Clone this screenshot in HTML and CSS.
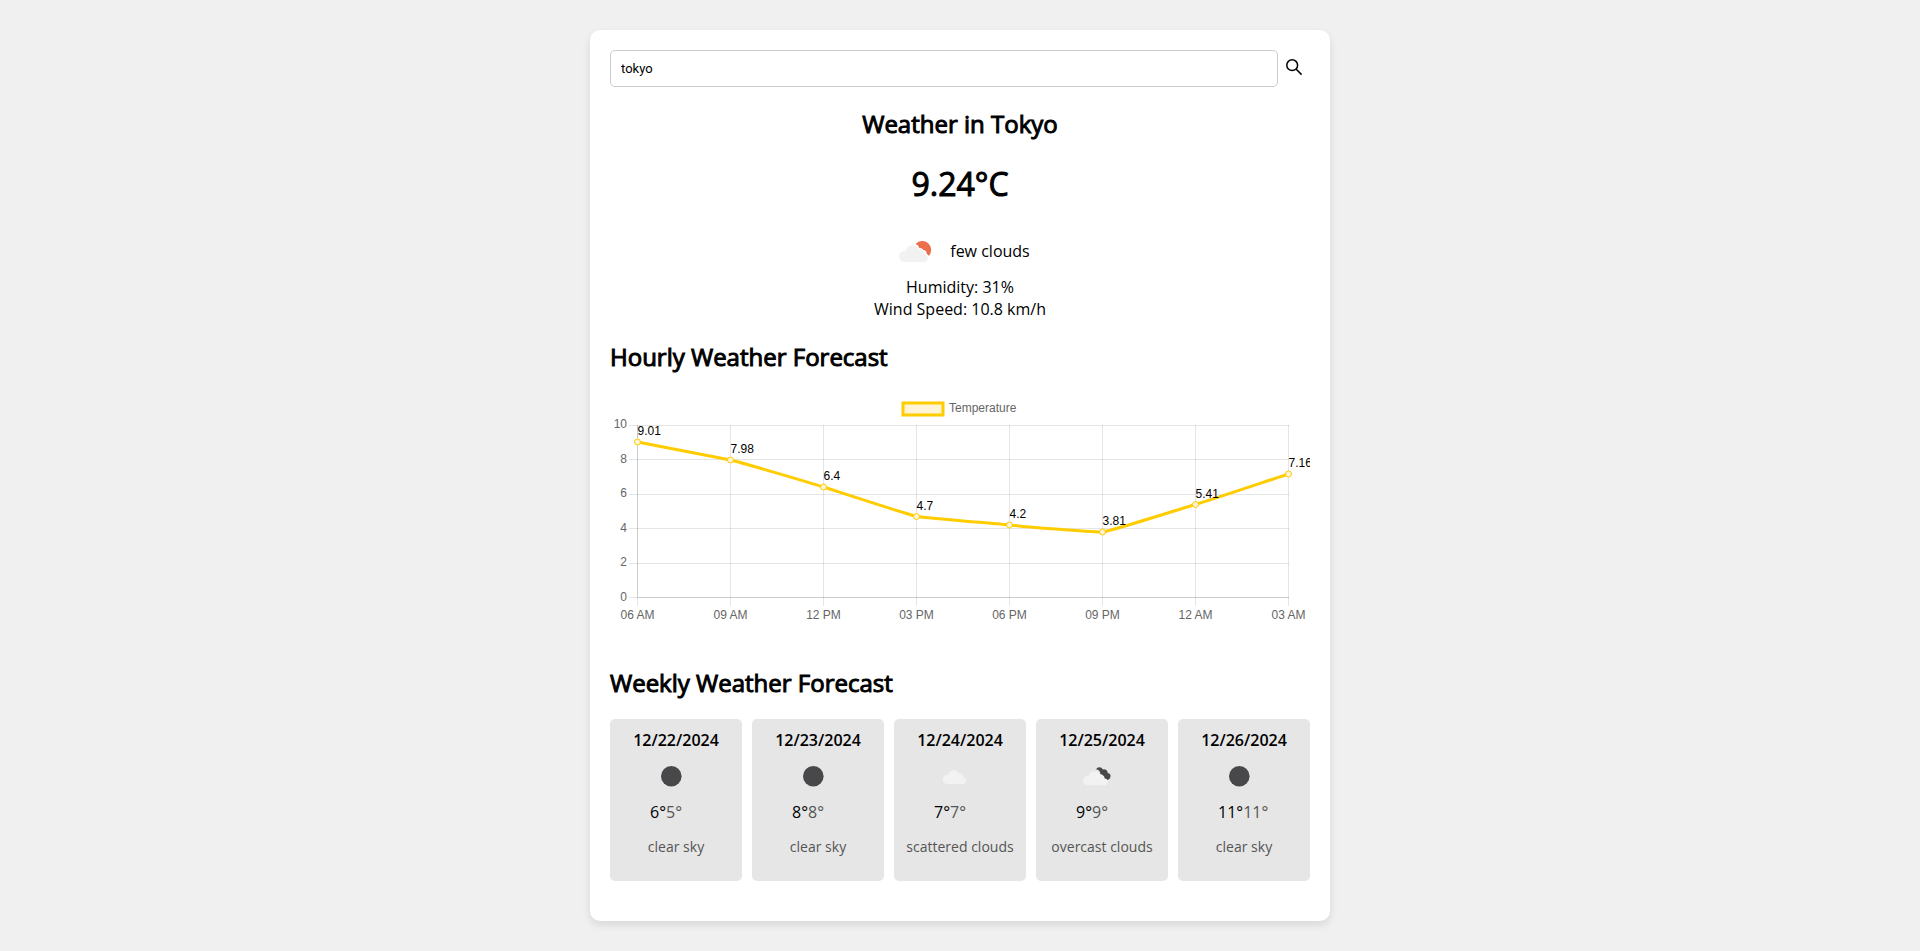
FILE: index.html
```html
<!DOCTYPE html>
<html lang="en">
<head>
<meta charset="utf-8">
<title>Weather</title>
<link rel="stylesheet" href="styles.css">
</head>
<body>
<svg class="sprite" aria-hidden="true">
  <symbol id="clear-night" viewBox="0 0 50 50"><circle cx="25.300" cy="25.300" r="10.300" fill="#48484a"/></symbol>
  <symbol id="cloud" viewBox="0 0 50 50"><path fill="#f2f2f2" d="M17.400 33a4.600 4.600 0 0 1-.2-9.200 4 4 0 0 1 1 .1 5.700 5.700 0 0 1 10.600-1.700 3.900 3.900 0 0 1 4.500 4 3.500 3.500 0 0 1 .5 6.800z"/></symbol>
  <symbol id="few-clouds" viewBox="0 0 50 50">
    <path fill="#ec6e4c" d="M25.600 18a8.300 8.300 0 1 1 13.300 11.900 6.500 6.500 0 0 0-2.300-2.200 3.500 3.500 0 0 0-3.200-3.600 4 4 0 0 0-4-2 6 6 0 0 0-3.800-4.100z"/>
    <path fill="#f2f2f2" d="M14.600 36a5.500 5.500 0 0 1-.4-11 5 5 0 0 1 1.400.2 7 7 0 0 1 13.300-1.900 4.500 4.500 0 0 1 5 4.700 4.100 4.100 0 0 1 1 8z"/>
  </symbol>
  <symbol id="overcast" viewBox="0 0 50 50">
    <path fill="#48484a" d="M24 18.200a3.900 3.900 0 0 1 6.900.3 3.600 3.600 0 0 1 4.800 3.600 3.400 3.400 0 1 1-1.600 6.600 4 4 0 0 1-2.700-2.200 4.500 4.500 0 0 0-3-3.500 5 5 0 0 0-4.400-4.800z"/>
    <path fill="#f2f2f2" d="M15.800 34.200a4.600 4.600 0 0 1-.4-9.200 4 4 0 0 1 1.300.2 6 6 0 0 1 11.300-1.600 3.900 3.900 0 0 1 4.600 3.900 3.400 3.400 0 0 1 .6 6.700z"/>
  </symbol>
</svg>
<main class="card">
  <form class="search">
    <input class="search-input" type="text" aria-label="City" value="tokyo">
    <button class="search-button" type="button" aria-label="Search">
      <svg viewBox="0 0 20 20" width="20" height="20" fill="none" stroke="#000" stroke-width="1.500"><circle cx="8.200" cy="8.200" r="5.400"/><path d="M12 12l5.600 5.600"/></svg>
    </button>
  </form>

  <section class="current">
    <h2 class="heading">Weather in Tokyo</h2>
    <h1 class="temperature">9.24°C</h1>
    <div class="condition">
      <svg class="icon"><use href="#few-clouds"/></svg>
      <span>few clouds</span>
    </div>
    <div>Humidity: 31%</div>
    <div>Wind Speed: 10.8 km/h</div>
  </section>

  <h2 class="heading">Hourly Weather Forecast</h2>
  <svg class="chart" viewBox="0 0 700 253" role="img" aria-label="Hourly temperature">
    <rect class="legend-box" x="293" y="10" width="40" height="12"/>
    <text class="axis" x="339" y="19">Temperature</text>
    <path class="grid" d="M19 32.500H679M19 66.500H679M19 101.500H679M19 135.500H679M19 170.500H679M19 204.500H679M27.500 32V213M120.500 32V213M213.500 32V213M306.500 32V213M399.500 32V213M492.500 32V213M585.500 32V213M678.500 32V213"/>
    <path class="grid" d="M27.500 32V204M27 204.500H679"/>
    <g class="axis end">
      <text x="17" y="35">10</text><text x="17" y="70">8</text><text x="17" y="104">6</text><text x="17" y="139">4</text><text x="17" y="173">2</text><text x="17" y="208">0</text>
    </g>
    <g class="axis middle">
      <text x="27.500" y="226">06 AM</text><text x="120.500" y="226">09 AM</text><text x="213.500" y="226">12 PM</text><text x="306.500" y="226">03 PM</text><text x="399.500" y="226">06 PM</text><text x="492.500" y="226">09 PM</text><text x="585.500" y="226">12 AM</text><text x="678.500" y="226">03 AM</text>
    </g>
    <path class="line" d="M27.500 49L120.500 67C130 69 204 91 213.500 94C223 97 297 121 306.500 123.500C316 125 390 131 399.500 132C409 133 483 139.500 492.500 139C502 138 576 114 585.500 111.500C595 109 669 84 678.500 81"/>
    <g class="point">
      <circle cx="27.500" cy="49" r="3"/><circle cx="120.500" cy="67" r="3"/><circle cx="213.500" cy="94" r="3"/><circle cx="306.500" cy="123.500" r="3"/><circle cx="399.500" cy="132" r="3"/><circle cx="492.500" cy="139" r="3"/><circle cx="585.500" cy="111.500" r="3"/><circle cx="678.500" cy="81" r="3"/>
    </g>
    <g class="value">
      <text x="27.500" y="42">9.01</text><text x="120.500" y="60">7.98</text><text x="213.500" y="87">6.4</text><text x="306.500" y="117">4.7</text><text x="399.500" y="125">4.2</text><text x="492.500" y="132">3.81</text><text x="585.500" y="105">5.41</text><text x="678.500" y="74">7.16</text>
    </g>
  </svg>

  <h2 class="heading">Weekly Weather Forecast</h2>
  <div class="week">
    <article class="day"><div class="date">12/22/2024</div><svg class="icon"><use href="#clear-night"/></svg><div class="range">6°<span class="low">5°</span></div><p class="description">clear sky</p></article>
    <article class="day"><div class="date">12/23/2024</div><svg class="icon"><use href="#clear-night"/></svg><div class="range">8°<span class="low">8°</span></div><p class="description">clear sky</p></article>
    <article class="day"><div class="date">12/24/2024</div><svg class="icon"><use href="#cloud"/></svg><div class="range">7°<span class="low">7°</span></div><p class="description">scattered clouds</p></article>
    <article class="day"><div class="date">12/25/2024</div><svg class="icon"><use href="#overcast"/></svg><div class="range">9°<span class="low">9°</span></div><p class="description">overcast clouds</p></article>
    <article class="day"><div class="date">12/26/2024</div><svg class="icon"><use href="#clear-night"/></svg><div class="range">11°<span class="low">11°</span></div><p class="description">clear sky</p></article>
  </div>
</main>
</body>
</html>
```
FILE: styles.css
```css
* {
  box-sizing: border-box;
}

body {
  margin: 0;
  padding: 30px 20px;
  background: #f0f0f0;
  color: #000;
  font: 16px/22px "Open Sans", "Noto Sans", sans-serif;
}

.sprite {
  display: none;
}

.card {
  max-width: 740px;
  margin: 0 auto;
  padding: 20px 20px 40px;
  border-radius: 10px;
  background: #fff;
  box-shadow: 0 4px 8px rgba(0, 0, 0, 0.1);
}

.search {
  display: flex;
  align-items: center;
  padding-right: 6px;
}

.search-input {
  flex: 1;
  min-width: 0;
  height: 37px;
  padding: 0 10px 1px;
  border: 1px solid #ccc;
  border-radius: 5px;
  background: #fff;
  color: #000;
  font: 13px/18px Roboto, "Open Sans", sans-serif;
}

.search-button {
  display: flex;
  width: 26px;
  height: 37px;
  padding: 7px 0 0 6px;
  border: 0;
  background: none;
}

.current {
  text-align: center;
}

.heading {
  margin: 20px 0;
  font-size: 24px;
  line-height: 33px;
  font-weight: 400;
  -webkit-text-stroke: 1px #000;
}

.temperature {
  margin: 22px 0 20px;
  font-size: 32px;
  line-height: 44px;
  font-weight: 400;
  -webkit-text-stroke: 1px #000;
}

.icon {
  display: inline-block;
  width: 50px;
  height: 50px;
  margin-right: 10px;
  vertical-align: top;
}

.condition {
  display: flex;
  align-items: center;
  justify-content: center;
}

.chart {
  display: block;
  width: 100%;
  height: auto;
  overflow: hidden;
  font: 12px "Liberation Sans", Arial, sans-serif;
}

.axis {
  fill: #666;
}

.end {
  text-anchor: end;
}

.middle {
  text-anchor: middle;
}

.grid {
  fill: none;
  stroke: rgba(0, 0, 0, 0.1);
}

.line {
  fill: none;
  stroke: #fc0;
  stroke-width: 3;
}

.legend-box {
  fill: #fff4d6;
  stroke: #fc0;
  stroke-width: 3;
}

.point {
  fill: #fff4d6;
  stroke: #fc0;
}

.week {
  display: grid;
  grid-template-columns: repeat(5, 1fr);
  gap: 10px;
}

.day {
  padding: 10px 8px 11px;
  border-radius: 5px;
  background: #e6e6e6;
  text-align: center;
}

.date {
  font-weight: 600;
}

.range {
  padding-left: 32px;
  text-align: left;
}

.low {
  color: #555;
}

.description {
  margin: 14px 0;
  color: #555;
  font-size: 14px;
  line-height: 19px;
}
```
